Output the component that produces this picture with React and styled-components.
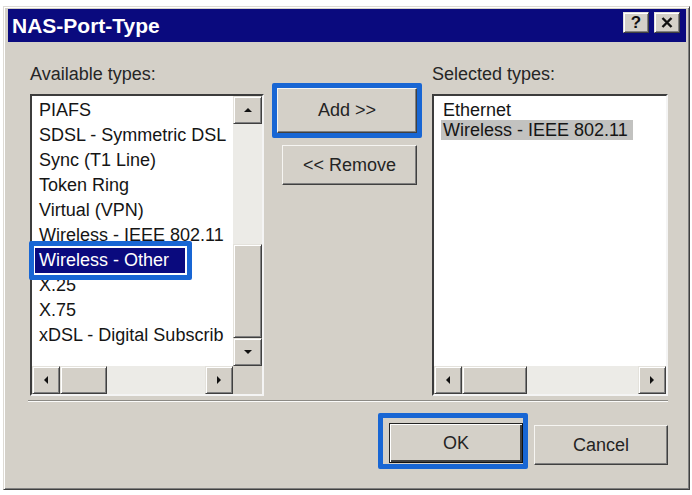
import React from 'react'
import styled, { createGlobalStyle } from 'styled-components'

const GlobalStyle = createGlobalStyle`
  html, body {
    margin: 0;
    padding: 0;
    background: #fff;
  }
  body {
    font-family: "Liberation Sans", Arial, sans-serif;
  }
`

// the list is only wide enough to show this much of the last entry
const available = [
  'PIAFS',
  'SDSL - Symmetric DSL',
  'Sync (T1 Line)',
  'Token Ring',
  'Virtual (VPN)',
  'Wireless - IEEE 802.11',
  'Wireless - Other',
  'X.25',
  'X.75',
  'xDSL - Digital Subscrib',
]

const selected = ['Ethernet', 'Wireless - IEEE 802.11']

const Arrow = ({ dir }) => {
  const pts = {
    up: '1,7 5,3 9,7',
    down: '1,3 5,7 9,3',
    left: '7,1 3,5 7,9',
    right: '3,1 7,5 3,9',
  }
  return (
    <svg width="10" height="10" viewBox="0 0 10 10">
      <polygon points={pts[dir]} fill="#111" />
    </svg>
  )
}

const HScrollBar = ({ thumb }) => (
  <HScroll>
    <ScrollButton><Arrow dir="left" /></ScrollButton>
    <Thumb $w={thumb} />
    <Track />
    <ScrollButton><Arrow dir="right" /></ScrollButton>
  </HScroll>
)

const VScrollBar = () => (
  <VScroll>
    <ScrollButton><Arrow dir="up" /></ScrollButton>
    <Track />
    <Thumb $h={94} />
    <ScrollButton><Arrow dir="down" /></ScrollButton>
  </VScroll>
)

const App = () => {
  return (
    <>
      <GlobalStyle />
      <Window>
        <TitleBar>
          <Title>NAS-Port-Type</Title>
          <TitleButtons>
            <TitleButton>?</TitleButton>
            <TitleButton>
              <svg width="12" height="11" viewBox="0 0 12 11">
                <path d="M1.5 1 L10.5 10 M10.5 1 L1.5 10" stroke="#111" strokeWidth="2.4" />
              </svg>
            </TitleButton>
          </TitleButtons>
        </TitleBar>
        <Body>
          <Columns>
            <Column $w={234}>
              <Label>Available types:</Label>
              <ListFrame $vbar>
                <ListContent $padTop={2}>
                  {available.map((name) => (
                    <Row key={name} $h={25} $open={name === 'Wireless - Other'}>
                      <Item $sel={name === 'Wireless - Other' ? 'active' : ''} $inset={3} $padL={4} $padR={16}>
                        {name}
                        {name === 'Wireless - Other' && <ItemMarker />}
                      </Item>
                    </Row>
                  ))}
                </ListContent>
                <VScrollBar />
                <HScrollBar thumb={47} />
                <Corner />
              </ListFrame>
            </Column>
            <Middle>
              <Marker $w={150} $h={55}>
                <Button $fill>Add &gt;&gt;</Button>
              </Marker>
              <RemoveButton>&lt;&lt; Remove</RemoveButton>
            </Middle>
            <Column $w={236} $gap={10}>
              <Label>Selected types:</Label>
              <ListFrame>
                <ListContent $padTop={4}>
                  {selected.map((name, i) => (
                    <Row key={name} $h={20}>
                      <Item $sel={i === 1 ? 'inactive' : ''} $inset={7} $padL={2} $padR={5}>
                        {name}
                      </Item>
                    </Row>
                  ))}
                </ListContent>
                <HScrollBar thumb={65} />
              </ListFrame>
            </Column>
          </Columns>
          <Separator />
          <Footer>
            <Marker $w={150} $h={56} $pad="5px 0 0 6px">
              <Button $default>OK</Button>
            </Marker>
            <Button $top={12}>Cancel</Button>
          </Footer>
        </Body>
      </Window>
    </>
  )
}

export default App

const raised = `
  border: 1px solid;
  border-color: #e4e2dc #404040 #404040 #e4e2dc;
  box-shadow: inset 1px 1px #fff, inset -1px -1px #808080;
`

const Window = styled.div`
  box-sizing: border-box;
  width: 687px;
  height: 484px;
  margin: 6px 0 0 3px;
  background: #d4d0c8;
  border: 1px solid;
  border-color: #dedbd5 #404040 #404040 #dedbd5;
  box-shadow: inset 1px 1px #fff, inset -1px -1px #808080;
  padding: 2px 3px 0 4px;
  display: flex;
  flex-direction: column;
`

const TitleBar = styled.div`
  height: 33px;
  flex-shrink: 0;
  background: #0a0a7e;
  display: flex;
  align-items: center;
  justify-content: space-between;
  padding: 0 6px 0 4px;
`

const Title = styled.div`
  color: #fff;
  font-weight: bold;
  font-size: 21px;
  line-height: 33px;
`

const TitleButtons = styled.div`
  display: flex;
  gap: 5px;
  align-self: flex-start;
  margin-top: 3px;
`

const TitleButton = styled.div`
  box-sizing: border-box;
  width: 26px;
  height: 21px;
  background: #d4d0c8;
  ${raised}
  display: flex;
  align-items: center;
  justify-content: center;
  font-weight: bold;
  font-size: 17px;
  color: #111;
`

const Body = styled.div`
  flex: 1;
  padding: 22px 18px 0 22px;
  display: flex;
  flex-direction: column;
`

const Columns = styled.div`
  display: flex;
  align-items: flex-start;
`

const Column = styled.div`
  width: ${(p) => p.$w}px;
  margin-left: ${(p) => p.$gap || 0}px;
  display: flex;
  flex-direction: column;
`

const Label = styled.div`
  height: 20px;
  line-height: 20px;
  font-size: 18px;
  color: #262626;
  white-space: nowrap;
`

const ListFrame = styled.div`
  box-sizing: border-box;
  margin-top: 10px;
  height: 302px;
  background: #fff;
  border: 2px solid;
  border-color: #3c3c3c #f4f4f4 #f4f4f4 #3c3c3c;
  display: grid;
  grid-template-columns: ${(p) => (p.$vbar ? '1fr 29px' : '1fr')};
  grid-template-rows: 1fr 28px;
  min-width: 0;
`

const ListContent = styled.div`
  padding-top: ${(p) => p.$padTop}px;
  min-width: 0;
`

const Row = styled.div`
  height: ${(p) => p.$h}px;
  line-height: ${(p) => p.$h}px;
  white-space: nowrap;
  overflow: ${(p) => (p.$open ? 'visible' : 'hidden')};
  font-size: 18px;
  color: #151515;
`

const Item = styled.span`
  position: relative;
  display: inline-block;
  height: 100%;
  margin-left: ${(p) => p.$inset}px;
  padding: 0 ${(p) => p.$padR}px 0 ${(p) => p.$padL}px;
  background: ${(p) => (p.$sel === 'active' ? '#0a0a7e' : p.$sel === 'inactive' ? '#c2c2c0' : 'transparent')};
  color: ${(p) => (p.$sel === 'active' ? '#fff' : '#151515')};
`

const ItemMarker = styled.span`
  position: absolute;
  top: -7px;
  left: -6px;
  right: -7px;
  bottom: -7px;
  border: 5px solid #1866d4;
  border-radius: 2px;
  z-index: 2;
`

const HScroll = styled.div`
  grid-column: 1;
  grid-row: 2;
  display: flex;
  min-width: 0;
`

const VScroll = styled.div`
  grid-column: 2;
  grid-row: 1;
  display: flex;
  flex-direction: column;
`

const ScrollButton = styled.div`
  box-sizing: border-box;
  width: 28px;
  height: 28px;
  flex-shrink: 0;
  background: #d4d0c8;
  ${raised}
  display: flex;
  align-items: center;
  justify-content: center;
  ${VScroll} & {
    width: 29px;
  }
`

const Thumb = styled.div`
  box-sizing: border-box;
  flex-shrink: 0;
  width: ${(p) => (p.$w ? `${p.$w}px` : '29px')};
  height: ${(p) => (p.$h ? `${p.$h}px` : '28px')};
  background: #d4d0c8;
  ${raised}
`

const Track = styled.div`
  flex: 1;
  background: #ecebe7;
`

const Corner = styled.div`
  grid-column: 2;
  grid-row: 2;
  background: #d4d0c8;
`

const Middle = styled.div`
  width: 150px;
  margin-left: 8px;
  padding-top: 19px;
  display: flex;
  flex-direction: column;
  align-items: flex-start;
`

const Marker = styled.div`
  box-sizing: border-box;
  width: ${(p) => p.$w}px;
  height: ${(p) => p.$h}px;
  padding: ${(p) => p.$pad || 0};
  border: 5px solid #1866d4;
  border-radius: 2px;
  flex-shrink: 0;
`

const Button = styled.div`
  box-sizing: border-box;
  width: ${(p) => (p.$fill ? '100%' : '134px')};
  height: ${(p) => (p.$fill ? '100%' : '40px')};
  margin-top: ${(p) => p.$top || 0}px;
  background: #d4d0c8;
  border: 1px solid;
  border-color: ${(p) => (p.$default ? '#222 #111 #111 #222' : '#f6f5f2 #404040 #404040 #f6f5f2')};
  box-shadow: ${(p) =>
    p.$default
      ? 'inset 1px 1px #fff, inset -2px -2px #404040'
      : 'inset -1px -1px #808080'};
  display: flex;
  align-items: center;
  justify-content: center;
  font-size: 18px;
  color: #242424;
`

const RemoveButton = styled(Button)`
  width: 135px;
  margin: 7px 0 0 10px;
`

const Separator = styled.div`
  margin: 4px 0 0 -2px;
  width: calc(100% + 2px);
  border-top: 1px solid #8c8a85;
  border-bottom: 1px solid #fbfbfa;
`

const Footer = styled.div`
  display: flex;
  justify-content: flex-end;
  align-items: flex-start;
  gap: 6px;
  margin-top: 11px;
`
